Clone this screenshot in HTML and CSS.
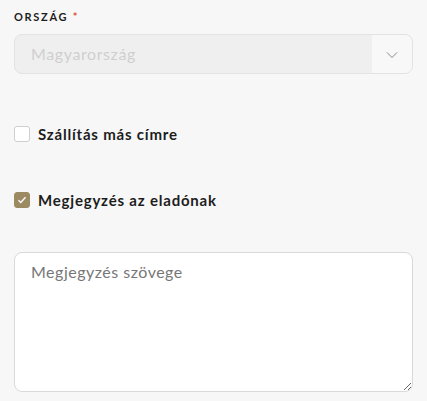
FILE: index.html
```html
<!DOCTYPE html>
<html lang="hu">
<head>
    <meta charset="UTF-8">
    <meta name="viewport" content="width=device-width, initial-scale=1.0">
    <title>Szállítási adatok</title>
    <link rel="stylesheet" href="styles.css">
</head>
<body>
    <form class="checkout-form">
        <div class="field">
            <label class="field-label">Ország <span class="required">*</span></label>
            <div class="select-box disabled">
                <span class="select-value">Magyarország</span>
                <span class="select-arrow">
                    <svg width="12" height="8" viewBox="0 0 12 8">
                        <path d="M1 1.5 L6 6.5 L11 1.5" fill="none" stroke="#888" stroke-width="1"/>
                    </svg>
                </span>
            </div>
        </div>

        <label class="check-row">
            <span class="check-box"></span>
            <span class="check-text">Szállítás más címre</span>
        </label>

        <label class="check-row checked">
            <span class="check-box">
                <svg width="10" height="8" viewBox="0 0 10 8">
                    <path d="M1.5 4.2 L3.8 6.5 L8.5 1.2" fill="none" stroke="#fff" stroke-width="1.4"/>
                </svg>
            </span>
            <span class="check-text">Megjegyzés az eladónak</span>
        </label>

        <textarea class="note-area" placeholder="Megjegyzés szövege"></textarea>
    </form>
</body>
</html>
```

FILE: styles.css
```css
* {
    box-sizing: border-box;
    margin: 0;
    padding: 0;
}

body {
    background-color: #f7f7f7;
    color: #1d1d1d;
    font-family: 'Lato', 'Noto Sans', sans-serif;
    padding: 9px 14px 0 14px;
}

.checkout-form {
    display: flex;
    flex-direction: column;
}

.field-label {
    display: block;
    font-size: 11px;
    font-weight: 700;
    letter-spacing: 1.7px;
    text-transform: uppercase;
    line-height: 15px;
    color: #1d1d1d;
}

.required {
    color: #e0523a;
    letter-spacing: 0;
}

.select-box {
    margin-top: 10px;
    height: 40px;
    display: flex;
    border: 1px solid #e3e3e3;
    border-radius: 8px;
    background: #efefef;
    overflow: hidden;
}

.select-value {
    flex: 1;
    padding-left: 16px;
    line-height: 38px;
    font-size: 16px;
    letter-spacing: 0.6px;
    color: #cfcfcf;
}

.select-arrow {
    width: 40px;
    background: #f8f8f8;
    display: flex;
    align-items: center;
    justify-content: center;
    padding-top: 2px;
}

.check-row {
    display: flex;
    align-items: center;
    gap: 8px;
    font-size: 15px;
    font-weight: 700;
    letter-spacing: 0.8px;
    line-height: 18px;
    margin-top: 51px;
}

.check-row + .check-row {
    margin-top: 48px;
}

.check-box {
    width: 16px;
    height: 16px;
    border: 1px solid #cfcfcf;
    border-radius: 3px;
    background: #fff;
    display: flex;
    align-items: center;
    justify-content: center;
}

.check-row.checked .check-box {
    background: #9c8a62;
    border-color: #9c8a62;
}

.note-area {
    margin-top: 43px;
    width: 100%;
    height: 140px;
    border: 1px solid #d9d9d9;
    border-radius: 8px;
    background: #fff;
    padding: 9px 16px;
    font-family: 'Lato', 'Noto Sans', sans-serif;
    font-size: 16px;
    letter-spacing: 0.5px;
    resize: vertical;
}

.note-area::placeholder {
    color: #777;
}
```
